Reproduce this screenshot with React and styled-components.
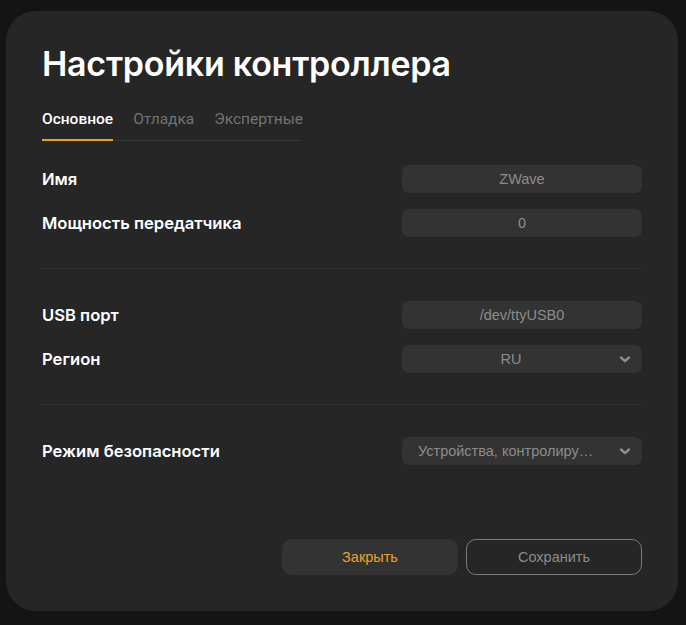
import React from "react";
import styled, { createGlobalStyle } from "styled-components";

const Global = createGlobalStyle`
  html, body { margin: 0; padding: 0; background: #141414; }
  body { width: 686px; height: 625px; overflow: hidden; }
`;

const Page = styled.div`
  padding: 11px 8px 14px 6px;
  box-sizing: border-box;
  height: 625px;
`;

const Card = styled.div`
  width: 672px;
  height: 600px;
  box-sizing: border-box;
  background: #262626;
  border-radius: 30px;
  padding: 31px 36px 36px 36px;
  display: flex;
  flex-direction: column;
`;

const Title = styled.h1`
  margin: 0;
  font-family: Inter, "Noto Sans", sans-serif;
  font-weight: 600;
  font-size: 34px;
  line-height: 44px;
  color: #ffffff;
  letter-spacing: -0.25px;
`;

const Tabs = styled.div`
  margin-top: 24px;
  display: flex;
  gap: 20px;
  width: 260px;
  border-bottom: 1px solid #363636;
`;

const Tab = styled.div`
  font-family: Roboto, "Noto Sans", sans-serif;
  font-size: 15.5px;
  line-height: 19px;
  padding-bottom: 10px;
  color: ${(p) => (p.$active ? "#ffffff" : "#737373")};
  font-weight: ${(p) => (p.$active ? 500 : 400)};
  border-bottom: 2px solid ${(p) => (p.$active ? "#f0a020" : "transparent")};
  margin-bottom: -1px;
`;

const Section = styled.div`
  display: flex;
  flex-direction: column;
  gap: 16px;
  padding: ${(p) => p.$pad || "32px 0"};
  border-bottom: ${(p) => (p.$divider ? "1px solid #333333" : "none")};
`;

const Row = styled.div`
  display: flex;
  align-items: center;
  justify-content: space-between;
  height: 28px;
`;

const Label = styled.div`
  font-family: Inter, "Noto Sans", sans-serif;
  font-weight: 600;
  font-size: 16.6px;
  color: #ffffff;
`;

const Field = styled.div`
  position: relative;
  width: 240px;
  height: 28px;
  box-sizing: border-box;
  background: #333333;
  border-radius: 7px;
  display: flex;
  align-items: center;
  justify-content: center;
  padding: 0 ${(p) => (p.$select ? "38px" : "8px")} 0 ${(p) => (p.$select ? "16px" : "8px")};
  font-family: "Liberation Sans", Arial, sans-serif;
  font-size: 14.5px;
  color: #8c8c8c;
  white-space: nowrap;
  overflow: hidden;
`;

const FieldText = styled.span`
  overflow: hidden;
  text-overflow: ellipsis;
  white-space: nowrap;
`;

const Chevron = styled.svg`
  position: absolute;
  right: 11px;
  top: 9px;
  width: 12px;
  height: 10px;
`;

const Spacer = styled.div`
  flex: 1;
`;

const Buttons = styled.div`
  display: flex;
  justify-content: flex-end;
  gap: 8px;
`;

const Button = styled.button`
  width: 176px;
  height: 36px;
  box-sizing: border-box;
  border-radius: 10px;
  font-family: "Liberation Sans", Arial, sans-serif;
  font-size: 14.5px;
  cursor: pointer;
  background: ${(p) => (p.$outline ? "transparent" : "#333333")};
  border: ${(p) => (p.$outline ? "1px solid #7a7a7a" : "none")};
  color: ${(p) => (p.$outline ? "#8c8c8c" : "#f0a020")};
`;

const ChevronIcon = () => (
  <Chevron viewBox="0 0 12 10">
    <path d="M2 3.5 L6 7.2 L10 3.5" fill="none" stroke="#8c8c8c" strokeWidth="2.4" strokeLinecap="round" strokeLinejoin="round" />
  </Chevron>
);

const Input = ({ value, select }) => (
  <Field $select={select}>
    <FieldText>{value}</FieldText>
    {select && <ChevronIcon />}
  </Field>
);

export default function App() {
  return (
    <>
      <Global />
      <Page>
        <Card>
          <Title>Настройки контроллера</Title>
          <Tabs>
            <Tab $active>Основное</Tab>
            <Tab>Отладка</Tab>
            <Tab>Экспертные</Tab>
          </Tabs>
          <Section $divider $pad="24px 0 31px">
            <Row>
              <Label>Имя</Label>
              <Input value="ZWave" />
            </Row>
            <Row>
              <Label>Мощность передатчика</Label>
              <Input value="0" />
            </Row>
          </Section>
          <Section $divider $pad="32px 0 31px">
            <Row>
              <Label>USB порт</Label>
              <Input value="/dev/ttyUSB0" />
            </Row>
            <Row>
              <Label>Регион</Label>
              <Input value="RU" select />
            </Row>
          </Section>
          <Section $pad="32px 0 0">
            <Row>
              <Label>Режим безопасности</Label>
              <Input value="Устройства, контролирующие доступ" select />
            </Row>
          </Section>
          <Spacer />
          <Buttons>
            <Button>Закрыть</Button>
            <Button $outline>Сохранить</Button>
          </Buttons>
        </Card>
      </Page>
    </>
  );
}
